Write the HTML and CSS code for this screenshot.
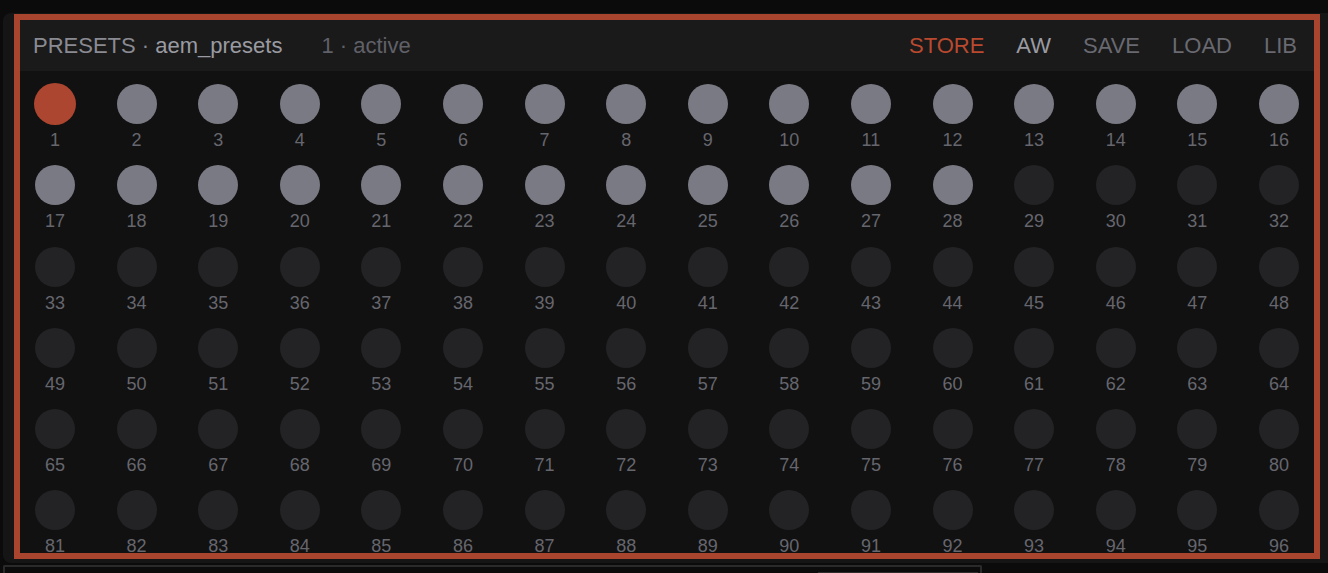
FILE: index.html
```html
<!DOCTYPE html>
<html lang="en">
<head>
<meta charset="utf-8">
<title>Presets</title>
<link rel="stylesheet" href="styles.css">
</head>
<body>
<div class="shell">
  <section class="panel">
    <div class="presets">
      <header class="bar">
        <div class="title">PRESETS · <span class="name">aem_presets</span></div>
        <div class="status">1 · active</div>
        <nav class="actions">
          <span class="act store">STORE</span>
          <span class="act aw">AW</span>
          <span class="act">SAVE</span>
          <span class="act">LOAD</span>
          <span class="act">LIB</span>
        </nav>
      </header>
      <div class="grid">
        <div class="cell"><span class="dot on"></span><span class="num">1</span></div>
        <div class="cell"><span class="dot set"></span><span class="num">2</span></div>
        <div class="cell"><span class="dot set"></span><span class="num">3</span></div>
        <div class="cell"><span class="dot set"></span><span class="num">4</span></div>
        <div class="cell"><span class="dot set"></span><span class="num">5</span></div>
        <div class="cell"><span class="dot set"></span><span class="num">6</span></div>
        <div class="cell"><span class="dot set"></span><span class="num">7</span></div>
        <div class="cell"><span class="dot set"></span><span class="num">8</span></div>
        <div class="cell"><span class="dot set"></span><span class="num">9</span></div>
        <div class="cell"><span class="dot set"></span><span class="num">10</span></div>
        <div class="cell"><span class="dot set"></span><span class="num">11</span></div>
        <div class="cell"><span class="dot set"></span><span class="num">12</span></div>
        <div class="cell"><span class="dot set"></span><span class="num">13</span></div>
        <div class="cell"><span class="dot set"></span><span class="num">14</span></div>
        <div class="cell"><span class="dot set"></span><span class="num">15</span></div>
        <div class="cell"><span class="dot set"></span><span class="num">16</span></div>
        <div class="cell"><span class="dot set"></span><span class="num">17</span></div>
        <div class="cell"><span class="dot set"></span><span class="num">18</span></div>
        <div class="cell"><span class="dot set"></span><span class="num">19</span></div>
        <div class="cell"><span class="dot set"></span><span class="num">20</span></div>
        <div class="cell"><span class="dot set"></span><span class="num">21</span></div>
        <div class="cell"><span class="dot set"></span><span class="num">22</span></div>
        <div class="cell"><span class="dot set"></span><span class="num">23</span></div>
        <div class="cell"><span class="dot set"></span><span class="num">24</span></div>
        <div class="cell"><span class="dot set"></span><span class="num">25</span></div>
        <div class="cell"><span class="dot set"></span><span class="num">26</span></div>
        <div class="cell"><span class="dot set"></span><span class="num">27</span></div>
        <div class="cell"><span class="dot set"></span><span class="num">28</span></div>
        <div class="cell"><span class="dot"></span><span class="num">29</span></div>
        <div class="cell"><span class="dot"></span><span class="num">30</span></div>
        <div class="cell"><span class="dot"></span><span class="num">31</span></div>
        <div class="cell"><span class="dot"></span><span class="num">32</span></div>
        <div class="cell"><span class="dot"></span><span class="num">33</span></div>
        <div class="cell"><span class="dot"></span><span class="num">34</span></div>
        <div class="cell"><span class="dot"></span><span class="num">35</span></div>
        <div class="cell"><span class="dot"></span><span class="num">36</span></div>
        <div class="cell"><span class="dot"></span><span class="num">37</span></div>
        <div class="cell"><span class="dot"></span><span class="num">38</span></div>
        <div class="cell"><span class="dot"></span><span class="num">39</span></div>
        <div class="cell"><span class="dot"></span><span class="num">40</span></div>
        <div class="cell"><span class="dot"></span><span class="num">41</span></div>
        <div class="cell"><span class="dot"></span><span class="num">42</span></div>
        <div class="cell"><span class="dot"></span><span class="num">43</span></div>
        <div class="cell"><span class="dot"></span><span class="num">44</span></div>
        <div class="cell"><span class="dot"></span><span class="num">45</span></div>
        <div class="cell"><span class="dot"></span><span class="num">46</span></div>
        <div class="cell"><span class="dot"></span><span class="num">47</span></div>
        <div class="cell"><span class="dot"></span><span class="num">48</span></div>
        <div class="cell"><span class="dot"></span><span class="num">49</span></div>
        <div class="cell"><span class="dot"></span><span class="num">50</span></div>
        <div class="cell"><span class="dot"></span><span class="num">51</span></div>
        <div class="cell"><span class="dot"></span><span class="num">52</span></div>
        <div class="cell"><span class="dot"></span><span class="num">53</span></div>
        <div class="cell"><span class="dot"></span><span class="num">54</span></div>
        <div class="cell"><span class="dot"></span><span class="num">55</span></div>
        <div class="cell"><span class="dot"></span><span class="num">56</span></div>
        <div class="cell"><span class="dot"></span><span class="num">57</span></div>
        <div class="cell"><span class="dot"></span><span class="num">58</span></div>
        <div class="cell"><span class="dot"></span><span class="num">59</span></div>
        <div class="cell"><span class="dot"></span><span class="num">60</span></div>
        <div class="cell"><span class="dot"></span><span class="num">61</span></div>
        <div class="cell"><span class="dot"></span><span class="num">62</span></div>
        <div class="cell"><span class="dot"></span><span class="num">63</span></div>
        <div class="cell"><span class="dot"></span><span class="num">64</span></div>
        <div class="cell"><span class="dot"></span><span class="num">65</span></div>
        <div class="cell"><span class="dot"></span><span class="num">66</span></div>
        <div class="cell"><span class="dot"></span><span class="num">67</span></div>
        <div class="cell"><span class="dot"></span><span class="num">68</span></div>
        <div class="cell"><span class="dot"></span><span class="num">69</span></div>
        <div class="cell"><span class="dot"></span><span class="num">70</span></div>
        <div class="cell"><span class="dot"></span><span class="num">71</span></div>
        <div class="cell"><span class="dot"></span><span class="num">72</span></div>
        <div class="cell"><span class="dot"></span><span class="num">73</span></div>
        <div class="cell"><span class="dot"></span><span class="num">74</span></div>
        <div class="cell"><span class="dot"></span><span class="num">75</span></div>
        <div class="cell"><span class="dot"></span><span class="num">76</span></div>
        <div class="cell"><span class="dot"></span><span class="num">77</span></div>
        <div class="cell"><span class="dot"></span><span class="num">78</span></div>
        <div class="cell"><span class="dot"></span><span class="num">79</span></div>
        <div class="cell"><span class="dot"></span><span class="num">80</span></div>
        <div class="cell"><span class="dot"></span><span class="num">81</span></div>
        <div class="cell"><span class="dot"></span><span class="num">82</span></div>
        <div class="cell"><span class="dot"></span><span class="num">83</span></div>
        <div class="cell"><span class="dot"></span><span class="num">84</span></div>
        <div class="cell"><span class="dot"></span><span class="num">85</span></div>
        <div class="cell"><span class="dot"></span><span class="num">86</span></div>
        <div class="cell"><span class="dot"></span><span class="num">87</span></div>
        <div class="cell"><span class="dot"></span><span class="num">88</span></div>
        <div class="cell"><span class="dot"></span><span class="num">89</span></div>
        <div class="cell"><span class="dot"></span><span class="num">90</span></div>
        <div class="cell"><span class="dot"></span><span class="num">91</span></div>
        <div class="cell"><span class="dot"></span><span class="num">92</span></div>
        <div class="cell"><span class="dot"></span><span class="num">93</span></div>
        <div class="cell"><span class="dot"></span><span class="num">94</span></div>
        <div class="cell"><span class="dot"></span><span class="num">95</span></div>
        <div class="cell"><span class="dot"></span><span class="num">96</span></div>
      </div>
    </div>
  </section>
  <section class="lower">
    <div class="lower-inner"></div>
  </section>
</div>
</body>
</html>
```

FILE: styles.css
```css
html, body {
  margin: 0;
  padding: 0;
  background: #0b0b0b;
  height: 100%;
  overflow: hidden;
}

body {
  font-family: "Liberation Sans", Arial, Helvetica, sans-serif;
}

.shell {
  padding: 13px 0 0 3px;
}

.panel {
  background: #151515;
  border-radius: 8px 0 0 8px;
  padding: 1px 8px 4px 11px;
}

.presets {
  width: 1294px;
  border: 6px solid #a9452f;
  background: #111111;
}

.bar {
  height: 51px;
  background: #1a1a1a;
  display: flex;
  align-items: center;
  padding: 0 17px 0 13px;
  font-size: 22px;
  white-space: nowrap;
}

.title {
  color: #8a8a92;
}

.name {
  color: #9a9aa2;
}

.status {
  margin-left: 39px;
  color: #606068;
}

.actions {
  margin-left: auto;
  display: flex;
  gap: 32px;
}

.act {
  color: #696971;
}

.act.store {
  color: #b9492f;
}

.act.aw {
  color: #9a9aa2;
}

.grid {
  height: 469px;
  overflow: hidden;
  padding: 13px 15px 0 15px;
  display: grid;
  grid-template-columns: repeat(16, 40px);
  justify-content: space-between;
  row-gap: 14.3px;
  align-content: start;
}

.cell {
  display: flex;
  flex-direction: column;
  align-items: center;
}

.dot {
  width: 40px;
  height: 40px;
  border-radius: 50%;
  background: #232326;
}

.dot.set {
  background: #7a7a84;
}

.dot.on {
  background: #ad4630;
  box-shadow: 0 0 0 1px #ad4630;
}

.num {
  margin-top: 6px;
  font-size: 18px;
  line-height: 21px;
  color: #66666e;
  white-space: nowrap;
}

.lower {
  margin-top: 2px;
  width: 973px;
  height: 20px;
  border: 2px solid #2a2a2a;
  border-bottom: none;
  border-radius: 2px 2px 0 0;
  padding: 5px 2px 0 0;
  display: flex;
  justify-content: flex-end;
}

.lower-inner {
  width: 160px;
  height: 20px;
  border-top: 1px solid #2e2e2e;
}
```
